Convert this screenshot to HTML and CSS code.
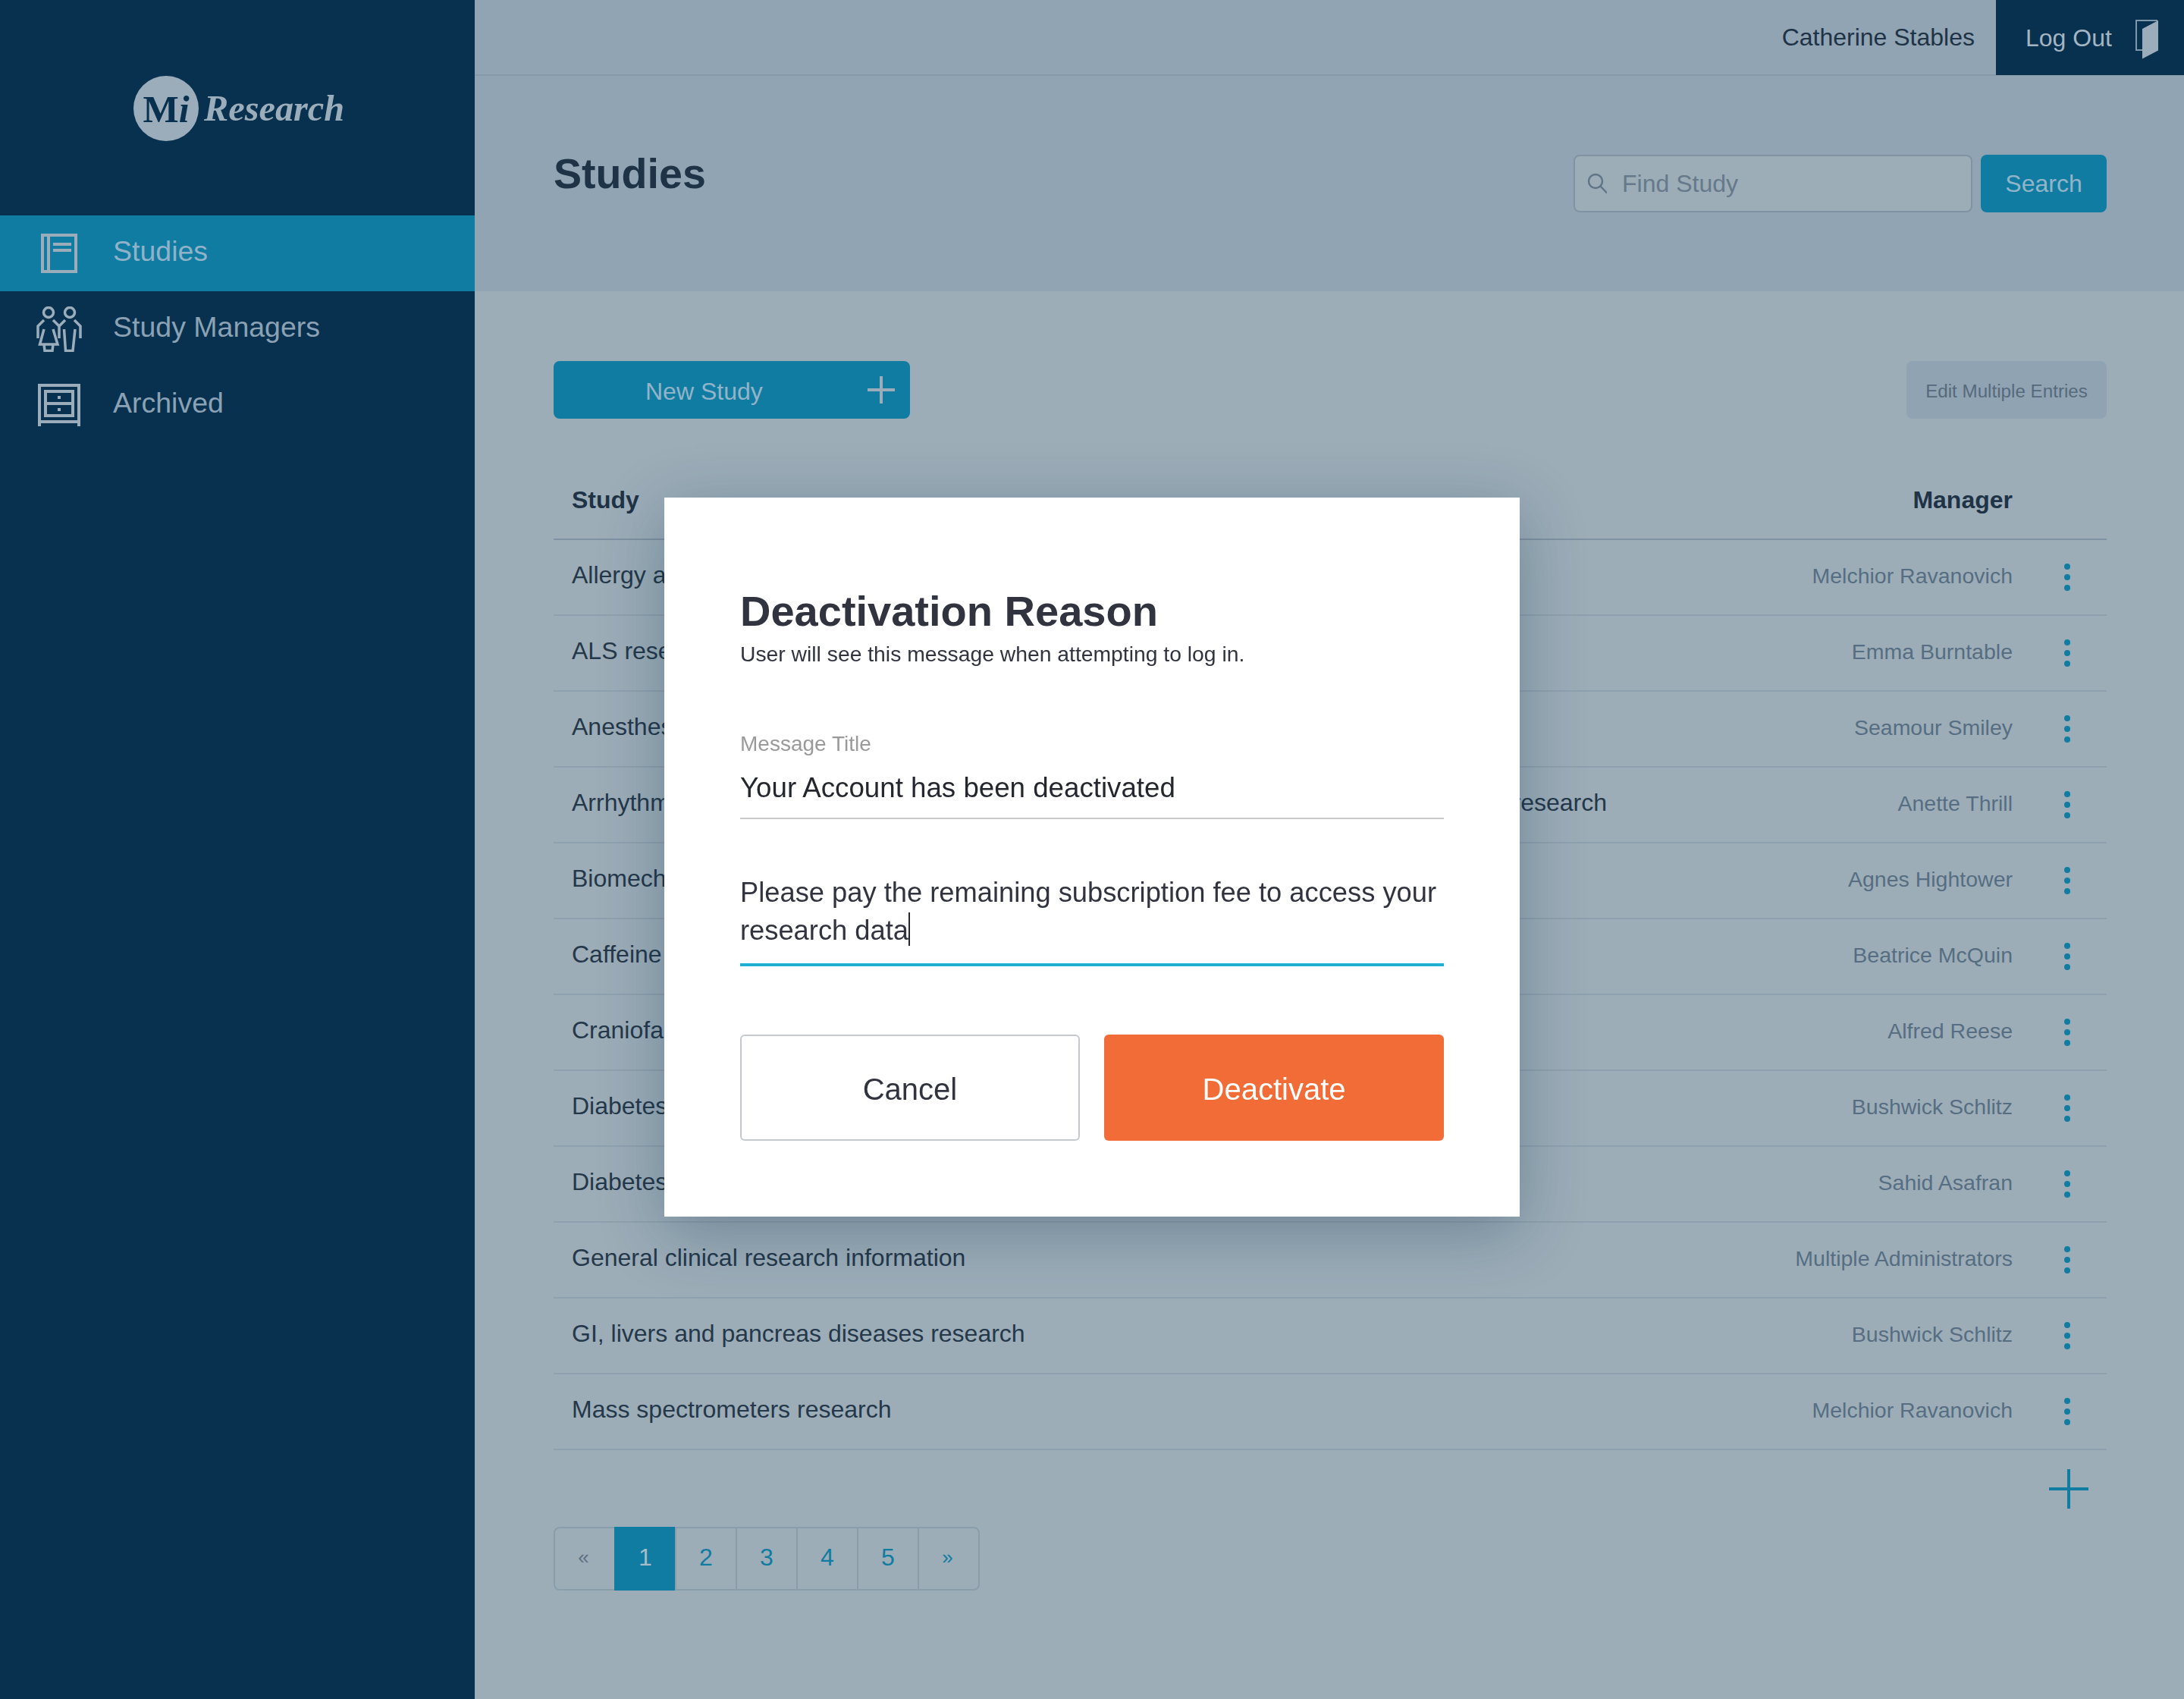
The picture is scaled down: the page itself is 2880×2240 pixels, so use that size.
FILE: index.html
```html
<!DOCTYPE html>
<html>
<head>
    <title>Mi Research - Studies</title>
    <meta name="viewport" content="width=device-width, initial-scale=1.0">
    <link rel="stylesheet" href="styles.css">
</head>

<body>

<div class="app">
    <aside class="sidebar">
        <div class="logo">
            <span class="logo-mark">M<i>i</i></span>
            <span class="logo-name">Research</span>
        </div>
        <nav>
            <a class="nav-item active">
                <span class="nav-icon">
                    <svg width="48" height="52" viewBox="0 0 48 52" fill="none" stroke="#9badba" stroke-width="4">
                        <rect x="2" y="2" width="44" height="48"/>
                        <path d="M10 2v48M16 14h24M16 22h24"/>
                    </svg>
                </span>
                <span class="nav-text">Studies</span>
            </a>
            <a class="nav-item">
                <span class="nav-icon">
                    <svg width="60" height="60" viewBox="0 0 60 60" fill="none" stroke="#9badba" stroke-width="3.500">
                        <circle cx="16" cy="8" r="6.500"/>
                        <circle cx="44" cy="8" r="6.500"/>
                        <path d="M10 18l-8 8v16M22 18l8 8 8-8M30 26v16M50 18l8 8v16"/>
                        <path d="M10 30L4.500 50h23.500L22 30M10 50l1 8.500h10l1-8.500"/>
                        <path d="M36.500 30l2 28.500h9.500l3-28.500"/>
                    </svg>
                </span>
                <span class="nav-text">Study Managers</span>
            </a>
            <a class="nav-item">
                <span class="nav-icon">
                    <svg width="56" height="56" viewBox="0 0 56 56" fill="none" stroke="#9badba" stroke-width="4">
                        <path d="M2 56V2h52v54M2 50h52"/>
                        <rect x="10" y="10" width="36" height="32"/>
                        <path d="M10 26h36"/>
                        <path d="M26 16h4v4h-4zM26 32h4v4h-4z" fill="#9badba" stroke="none"/>
                    </svg>
                </span>
                <span class="nav-text">Archived</span>
            </a>
        </nav>
    </aside>

    <main class="main">
        <div class="topbar">
            <span class="user-name">Catherine Stables</span>
            <a class="logout">
                Log Out
                <svg width="30" height="52" viewBox="0 0 30 52">
                    <path d="M9 40H1V1h28" fill="none" stroke="#7f97aa" stroke-width="2"/>
                    <path d="M30 1v39.500L9 51.500V12z" fill="#9badba"/>
                </svg>
            </a>
        </div>

        <header class="page-header">
            <h1>Studies</h1>
            <div class="search">
                <div class="search-input">
                    <svg width="26" height="28" viewBox="0 0 26 28" fill="none" stroke="#5f7485" stroke-width="2.400">
                        <circle cx="11" cy="11" r="9"/>
                        <path d="M17.500 17.500L26 26.500"/>
                    </svg>
                    <span>Find Study</span>
                </div>
                <button class="btn-search">Search</button>
            </div>
        </header>

        <section class="content">
            <div class="actions">
                <button class="btn-new">
                    <span class="btn-new-label">New Study</span>
                    <svg width="36" height="36" viewBox="0 0 36 36" stroke="#9badba" stroke-width="4"><path d="M18 0v36M0 18h36"/></svg>
                </button>
                <button class="btn-edit">Edit Multiple Entries</button>
            </div>

            <div class="table-head">
                <span class="col-study">Study</span>
                <span class="col-manager">Manager</span>
            </div>

            <div class="row">
                <span class="col-study">Allergy and asthma</span>
                <span class="col-manager">Melchior Ravanovich</span>
                <span class="dots"><b></b><b></b><b></b></span>
            </div>
            <div class="row">
                <span class="col-study">ALS research</span>
                <span class="col-manager">Emma Burntable</span>
                <span class="dots"><b></b><b></b><b></b></span>
            </div>
            <div class="row">
                <span class="col-study">Anesthesiology</span>
                <span class="col-manager">Seamour Smiley</span>
                <span class="dots"><b></b><b></b><b></b></span>
            </div>
            <div class="row">
                <span class="col-study">Arrhythmia and other heart rhythm disorders in adults and children and elderly patients' research</span>
                <span class="col-manager">Anette Thrill</span>
                <span class="dots"><b></b><b></b><b></b></span>
            </div>
            <div class="row">
                <span class="col-study">Biomechanics</span>
                <span class="col-manager">Agnes Hightower</span>
                <span class="dots"><b></b><b></b><b></b></span>
            </div>
            <div class="row">
                <span class="col-study">Caffeine research</span>
                <span class="col-manager">Beatrice McQuin</span>
                <span class="dots"><b></b><b></b><b></b></span>
            </div>
            <div class="row">
                <span class="col-study">Craniofacial research</span>
                <span class="col-manager">Alfred Reese</span>
                <span class="dots"><b></b><b></b><b></b></span>
            </div>
            <div class="row">
                <span class="col-study">Diabetes research</span>
                <span class="col-manager">Bushwick Schlitz</span>
                <span class="dots"><b></b><b></b><b></b></span>
            </div>
            <div class="row">
                <span class="col-study">Diabetes type 2</span>
                <span class="col-manager">Sahid Asafran</span>
                <span class="dots"><b></b><b></b><b></b></span>
            </div>
            <div class="row">
                <span class="col-study">General clinical research information</span>
                <span class="col-manager">Multiple Administrators</span>
                <span class="dots"><b></b><b></b><b></b></span>
            </div>
            <div class="row">
                <span class="col-study">GI, livers and pancreas diseases research</span>
                <span class="col-manager">Bushwick Schlitz</span>
                <span class="dots"><b></b><b></b><b></b></span>
            </div>
            <div class="row">
                <span class="col-study">Mass spectrometers research</span>
                <span class="col-manager">Melchior Ravanovich</span>
                <span class="dots"><b></b><b></b><b></b></span>
            </div>

            <div class="add-row">
                <svg width="52" height="52" viewBox="0 0 52 52" stroke="#107ca1" stroke-width="4"><path d="M26 0v52M0 26h52"/></svg>
            </div>

            <div class="pagination">
                <a class="page-arrow muted">«</a>
                <a class="page active">1</a>
                <a class="page">2</a>
                <a class="page">3</a>
                <a class="page">4</a>
                <a class="page">5</a>
                <a class="page-arrow">»</a>
            </div>
        </section>
    </main>
</div>

<div class="backdrop">
    <div class="modal">
        <h2>Deactivation Reason</h2>
        <p class="modal-sub">User will see this message when attempting to log in.</p>

        <label class="field-label">Message Title</label>
        <div class="field-value">Your Account has been deactivated</div>

        <div class="field-area">Please pay the remaining subscription fee to access your research data<span class="caret"></span></div>

        <div class="modal-buttons">
            <button class="btn-cancel">Cancel</button>
            <button class="btn-deactivate">Deactivate</button>
        </div>
    </div>
</div>

</body>
</html>
```
FILE: styles.css
```css
* {
    box-sizing: border-box;
}

html, body {
    margin: 0;
    padding: 0;
    height: 100%;
    overflow: hidden;
}

body {
    font-family: "Liberation Sans", Arial, sans-serif;
    font-size: 32px;
    color: #24384a;
    background: #9cadb8;
}

button {
    font-family: inherit;
    border: none;
    cursor: pointer;
}

.app {
    display: flex;
    height: 100vh;
}

/* sidebar */
.sidebar {
    width: 626px;
    flex-shrink: 0;
    background: #08304f;
}

.logo {
    height: 284px;
    padding: 100px 0 0 176px;
    display: flex;
    align-items: flex-start;
    font-family: "Liberation Serif", serif;
    font-weight: bold;
    color: #9badba;
}

.logo-mark {
    width: 86px;
    height: 86px;
    border-radius: 50%;
    background: #9badba;
    color: #08304f;
    font-size: 50px;
    line-height: 88px;
    text-align: center;
}

.logo-name {
    margin-left: 7px;
    font-size: 48.300px;
    font-style: italic;
    line-height: 86px;
}

.nav-item {
    display: flex;
    align-items: center;
    height: 100px;
    padding-left: 48px;
    font-size: 37.500px;
    color: #8aa2b4;
}

.nav-item.active {
    background: #107ca1;
    color: #8fb2c8;
}

.nav-icon {
    width: 60px;
    margin-right: 41px;
    display: flex;
    justify-content: center;
}

.nav-text {
    padding-bottom: 6px;
}

/* top */
.main {
    flex: 1;
    display: flex;
    flex-direction: column;
}

.topbar {
    height: 100px;
    display: flex;
    justify-content: flex-end;
    align-items: center;
    background: #91a4b3;
    border-bottom: 2px solid #8799a9;
}

.user-name {
    margin-right: 28px;
    color: #1f3347;
}

.logout {
    width: 248px;
    height: 100px;
    padding: 2px 34px 0 39px;
    display: flex;
    align-items: center;
    justify-content: space-between;
    background: #08304f;
    color: #a3b5c2;
}

.logout svg {
    margin-top: 4px;
}

.page-header {
    height: 284px;
    padding: 97px 102px 0 104px;
    display: flex;
    justify-content: space-between;
    align-items: flex-start;
    background: #91a4b3;
}

h1 {
    margin: 0;
    font-size: 55.600px;
    line-height: 64px;
    color: #1f3347;
}

.search {
    margin-top: 7px;
    display: flex;
    gap: 11px;
}

.search-input {
    width: 526px;
    height: 76px;
    padding-left: 16px;
    display: flex;
    align-items: center;
    gap: 20px;
    background: #9cadb8;
    border: 2px solid #8193a3;
    border-radius: 8px;
    color: #66798a;
}

.btn-search {
    width: 166px;
    height: 76px;
    background: #107ca1;
    border-radius: 8px;
    font-size: 32px;
    color: #92b4c8;
}

/* table */
.content {
    padding: 92px 102px 0 104px;
}

.actions {
    display: flex;
    justify-content: space-between;
}

.btn-new {
    width: 470px;
    height: 76px;
    padding: 0 20px 0 121px;
    display: flex;
    align-items: center;
    justify-content: space-between;
    background: #107ca1;
    border-radius: 8px;
    font-size: 32px;
    color: #92b4c8;
}

.btn-new-label {
    padding-top: 4px;
}

.btn-edit {
    width: 264px;
    height: 76px;
    padding-top: 4px;
    background: #90a3b3;
    border-radius: 8px;
    font-size: 24.200px;
    color: #566a7c;
}

.table-head {
    height: 100px;
    margin-top: 60px;
    padding: 0 124px 0 24px;
    display: flex;
    justify-content: space-between;
    align-items: center;
    border-bottom: 2px solid #7f92a2;
    font-weight: bold;
    color: #1f3347;
}

.table-head span {
    padding-bottom: 4px;
}

.row {
    height: 100px;
    padding: 0 48px 0 24px;
    display: flex;
    align-items: center;
    border-bottom: 2px solid #8fa1ae;
}

.row .col-study {
    flex: 1;
    padding-bottom: 6px;
    white-space: nowrap;
}

.row .col-manager {
    margin-right: 68px;
    padding-bottom: 4px;
    font-size: 28.500px;
    color: #566d82;
}

.dots {
    display: flex;
    flex-direction: column;
    gap: 6px;
}

.dots b {
    width: 8px;
    height: 8px;
    border-radius: 50%;
    background: #107ca1;
}

.add-row {
    margin-top: 25px;
    padding-right: 24px;
    height: 52px;
    display: flex;
    justify-content: flex-end;
}

.pagination {
    margin-top: 24px;
    display: flex;
    color: #107ca1;
}

.page, .page-arrow {
    width: 80px;
    height: 84px;
    padding-bottom: 4px;
    display: flex;
    align-items: center;
    justify-content: center;
    border: 2px solid #8a9dab;
    border-width: 2px 0 2px 2px;
}

.page-arrow {
    padding-right: 3px;
    font-size: 26px;
}

.page-arrow.muted {
    color: #5f7080;
    border-radius: 8px 0 0 8px;
}

.page-arrow:last-child {
    width: 82px;
    border-right-width: 2px;
    border-radius: 0 8px 8px 0;
}

.page.active {
    background: #107ca1;
    border-color: #107ca1;
    color: #a7bbc8;
}

/* modal */
.backdrop {
    position: fixed;
    top: 0;
    left: 0;
    right: 0;
    bottom: 0;
    padding-top: 20px;
    display: flex;
    align-items: center;
    justify-content: center;
}

.modal {
    width: 1128px;
    height: 948px;
    padding: 118px 100px 100px;
    background: white;
    box-shadow: 0 20px 80px rgba(8, 40, 70, 0.3);
    color: #31343f;
}

h2 {
    margin: 0;
    font-size: 56px;
    line-height: 64px;
}

.modal-sub {
    margin: 6px 0 0;
    font-size: 28.300px;
    line-height: 36px;
}

.field-label {
    display: block;
    margin-top: 85px;
    font-size: 28px;
    line-height: 32px;
    color: #9a9a9a;
}

.field-value {
    margin-top: 20px;
    padding-bottom: 17px;
    font-size: 36.700px;
    line-height: 44px;
    color: #24272e;
    border-bottom: 2px solid #c8caca;
}

.field-area {
    margin-top: 72px;
    padding-bottom: 18px;
    font-size: 36.300px;
    line-height: 50px;
    border-bottom: 4px solid #1fb0d3;
}

.caret {
    display: inline-block;
    width: 2px;
    height: 44px;
    margin-bottom: -8px;
    background: #24272e;
}

.modal-buttons {
    margin-top: 90px;
    display: flex;
    justify-content: space-between;
}

.btn-cancel, .btn-deactivate {
    width: 448px;
    height: 140px;
    padding-top: 6px;
    border-radius: 6px;
    font-size: 40px;
}

.btn-cancel {
    background: white;
    border: 2px solid #c6c9cc;
    color: #31343f;
}

.btn-deactivate {
    background: #f26c37;
    color: white;
}
```
